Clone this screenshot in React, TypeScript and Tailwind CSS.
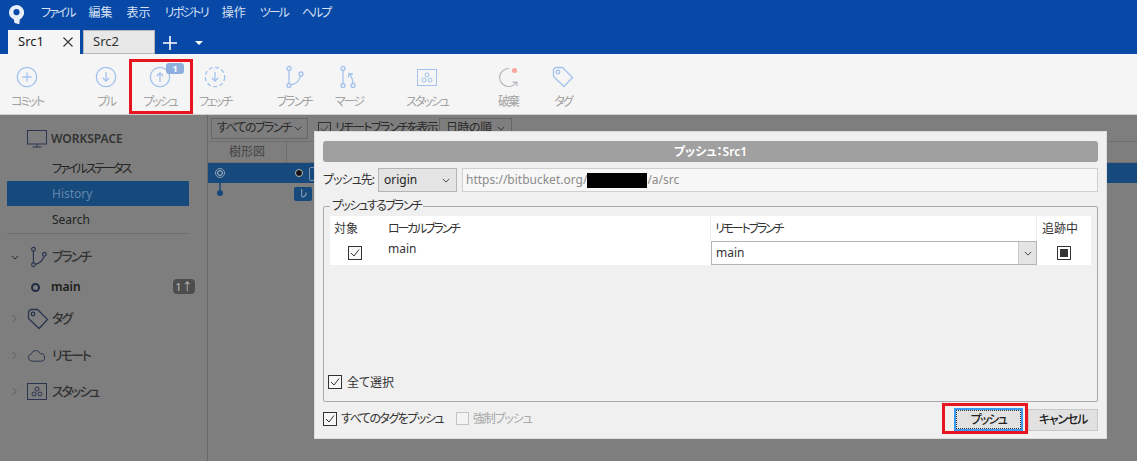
const navy = "#2b3550";
const lightBlue = "#a3c2ee";

function CheckBox({ className = "" }: { className?: string }) {
    return (
        <span className={`flex items-center justify-center w-[14px] h-[14px] border border-[#333] bg-[#f8f8f8] shrink-0 ${className}`}>
            <svg viewBox="0 0 12 12" className="w-[12px] h-[12px]" fill="none" stroke="#333" strokeWidth={1}>
                <path d="M2 6l3 3 5-6.5" />
            </svg>
        </span>
    );
}

function Chevron({ color = "#444" }: { color?: string }) {
    return (
        <svg viewBox="0 0 10 6" className="w-[8px] h-[5px]" fill="none" stroke={color} strokeWidth={1.2}>
            <path d="M1 1l4 4 4-4" />
        </svg>
    );
}

function BranchIcon({ color, size = 24 }: { color: string; size?: number }) {
    return (
        <svg viewBox="0 0 24 24" width={size} height={size} fill="none" stroke={color} strokeWidth={1.3}>
            <circle cx="7" cy="3.5" r="2" />
            <circle cx="7" cy="20.5" r="2" />
            <circle cx="19" cy="9" r="2" />
            <path d="M7 5.5v13M9 20c5-1 9-5 9.5-9" />
        </svg>
    );
}

function MergeIcon() {
    return (
        <svg viewBox="0 0 24 24" width={24} height={24} fill="none" stroke={lightBlue} strokeWidth={1.3}>
            <circle cx="6" cy="3.5" r="2" />
            <circle cx="6" cy="20.5" r="2" />
            <circle cx="16" cy="20.5" r="2" />
            <path d="M6 5.5v13M16 18.5c0-3-.5-5-3-9.5M11.5 12.5L12 8.5l4 .5" />
        </svg>
    );
}

function StashIcon({ color, w = 20, h = 17 }: { color: string; w?: number; h?: number }) {
    return (
        <svg viewBox="0 0 20 17" width={w} height={h} fill="none" stroke={color} strokeWidth={1}>
            <rect x="0.5" y="0.5" width="19" height="16" />
            <circle cx="10" cy="6" r="2" />
            <circle cx="7" cy="11" r="2" />
            <circle cx="13" cy="11" r="2" />
        </svg>
    );
}

function TagIcon({ color, size = 22 }: { color: string; size?: number }) {
    return (
        <svg viewBox="0 0 22 22" width={size} height={size} fill="none" stroke={color} strokeWidth={1.3}>
            <path d="M1.5 3.5l2-2h7l10 10-8.5 9-10.5-10z" />
            <circle cx="6" cy="6" r="1.8" />
        </svg>
    );
}

function CircleArrow({ dir, dashed = false }: { dir: "up" | "down"; dashed?: boolean }) {
    return (
        <svg viewBox="0 0 22 22" width={22} height={22} fill="none" stroke={lightBlue} strokeWidth={1.3}>
            <circle cx="11" cy="11" r="9.7" strokeDasharray={dashed ? "4 2.5" : undefined} />
            {dir === "up" ? <path d="M11 16V7M7.8 10L11 6.8 14.2 10" /> : <path d="M11 6v9M7.8 12L11 15.2 14.2 12" />}
        </svg>
    );
}

function ToolItem({ label, className, children }: { label: string; className?: string; children: React.ReactNode }) {
    return (
        <div className={`relative flex flex-col items-center w-[54px] shrink-0 ${className ?? ""}`}>
            <div className="h-[26px] flex items-center justify-center">{children}</div>
            <span className="mt-[4px] text-[12px] leading-[16px] tracking-[-2px] text-[#a2a2a2] whitespace-nowrap">{label}</span>
        </div>
    );
}

function SideHead({ label, open, icon, className }: { label: string; open?: boolean; icon: React.ReactNode; className: string }) {
    return (
        <div className={`flex items-center pl-[11px] ${className}`}>
            <span className="w-[16px] flex items-center">
                {open ? (
                    <Chevron color="#222" />
                ) : (
                    <svg viewBox="0 0 6 10" className="w-[5px] h-[9px] ml-[1px]" fill="none" stroke="#5c5c5c" strokeWidth={1.2}>
                        <path d="M1 1l4 4-4 4" />
                    </svg>
                )}
            </span>
            <span className="w-[24px] flex items-center">{icon}</span>
            <span className="text-[13px] font-medium tracking-[-2px] text-[#333] ml-[1px]">{label}</span>
        </div>
    );
}

export default function App() {
    return (
        <div className="relative w-full h-screen overflow-hidden flex flex-col bg-[#7e7e7e] font-['Noto_Sans','Noto_Sans_CJK_JP',sans-serif] [font-feature-settings:'palt']">
            {/* Title + tabs */}
            <div className="h-[54px] bg-[#0848a6] shrink-0">
                <div className="h-[30px] flex items-center pl-[8px] text-[12px] text-[#d5e0f2]">
                    <svg viewBox="0 0 18 22" width={17} height={21} className="mb-[2px]">
                        <path d="M1 9a8 8 0 1 1 11.5 7.2l-.5 5L7 20l-1-4A8 8 0 0 1 1 9z" fill="#e8eef8" />
                        <circle cx="9" cy="8.5" r="3.2" fill="#0848a6" />
                    </svg>
                    <div className="flex ml-[16px] gap-[14px] mb-[4px]">
                        <span className="tracking-[-2px]">ファイル</span>
                        <span>編集</span>
                        <span>表示</span>
                        <span className="tracking-[-1.8px]">リポジトリ</span>
                        <span>操作</span>
                        <span className="tracking-[-2px]">ツール</span>
                        <span className="tracking-[-2px]">ヘルプ</span>
                    </div>
                </div>
                <div className="h-[24px] flex items-end pl-[8px]">
                    <div className="h-[24px] w-[72px] bg-[#f5f5f5] flex items-center justify-between pl-[10px] pr-[7px] text-[13px] text-[#222]">
                        <span>Src1</span>
                        <svg viewBox="0 0 10 10" className="w-[10px] h-[10px]" stroke="#333" strokeWidth={1.1}>
                            <path d="M0.5 0.5l9 9M9.5 0.5l-9 9" />
                        </svg>
                    </div>
                    <div className="ml-[3px] h-[24px] w-[72px] bg-[#e8e8e8] border border-[#b8b8b8] flex items-center pl-[9px] text-[13px] text-[#333]">Src2</div>
                    <svg viewBox="0 0 14 14" className="w-[14px] h-[14px] ml-[8px] mb-[4px]" stroke="#fff" strokeWidth={1.6}>
                        <path d="M7 0v14M0 7h14" />
                    </svg>
                    <span className="ml-[18px] mb-[9px] w-0 h-0 border-x-[4px] border-x-transparent border-t-[4px] border-t-white" />
                </div>
            </div>

            {/* Toolbar */}
            <div className="relative h-[61px] shrink-0 bg-[#f5f5f5] border-b border-[#cfcfcf] flex pt-[10px]">
                <ToolItem label="コミット">
                    <svg viewBox="0 0 22 22" width={22} height={22} fill="none" stroke={lightBlue} strokeWidth={1.3}>
                        <circle cx="11" cy="11" r="9.7" />
                        <path d="M11 6.5v9M6.5 11h9" />
                    </svg>
                </ToolItem>
                <ToolItem label="プル" className="ml-[25px]">
                    <CircleArrow dir="down" />
                </ToolItem>
                <ToolItem label="プッシュ">
                    <CircleArrow dir="up" />
                    <span className="absolute left-[33px] -top-[1px] h-[11px] w-[18px] rounded-[3px] bg-[#8eaedd] text-white text-[9px] leading-[11px] font-bold text-center">1</span>
                </ToolItem>
                <ToolItem label="フェッチ" className="ml-[1px]">
                    <CircleArrow dir="down" dashed />
                </ToolItem>
                <ToolItem label="ブランチ" className="ml-[25px]">
                    <BranchIcon color={lightBlue} />
                </ToolItem>
                <ToolItem label="マージ" className="ml-[1px]">
                    <MergeIcon />
                </ToolItem>
                <ToolItem label="スタッシュ" className="ml-[24px]">
                    <StashIcon color={lightBlue} />
                </ToolItem>
                <ToolItem label="破棄" className="ml-[27px]">
                    <svg viewBox="0 0 22 22" width={22} height={22} fill="none" stroke="#b5b8bd" strokeWidth={1.2}>
                        <path d="M12 2.5A9 9 0 1 0 19.5 16M15.5 16.2h4.5v4" />
                        <circle cx="17.5" cy="4.5" r="2.5" fill="#f7a79b" stroke="none" />
                    </svg>
                </ToolItem>
                <ToolItem label="タグ" className="ml-[1px]">
                    <TagIcon color={lightBlue} />
                </ToolItem>
                <div className="absolute left-[129px] top-[5px] w-[64px] h-[55px] border-[3px] border-[#e8141f]" />
            </div>

            {/* Main */}
            <div className="flex flex-1 min-h-0">
                <div className="w-[208px] shrink-0 border-r border-[#676767] pt-[7px]">
                    <div className="w-[189px]">
                        <div className="h-[34px] flex items-center pl-[27px]">
                            <svg viewBox="0 0 20 18" width={20} height={18} fill="none" stroke={navy} strokeWidth={1}>
                                <rect x="0.5" y="0.5" width="19" height="13.5" />
                                <path d="M10 14v3M5.5 17h9" />
                            </svg>
                            <span className="ml-[4px] text-[12px] font-semibold text-[#333]">WORKSPACE</span>
                        </div>
                        <div className="h-[25px] flex items-center pl-[52px] text-[12px] tracking-[-2px] text-[#222]">ファイルステータス</div>
                        <div className="h-[25px] ml-[7px] bg-[#16497c] flex items-center pl-[45px] text-[12px] text-[#6488ac]">History</div>
                        <div className="h-[27px] flex items-center pl-[52px] text-[12px] text-[#222]">Search</div>
                        <div className="ml-[7px] border-t border-[#6c6c6c] h-[7px]" />
                        <SideHead label="ブランチ" open className="h-[34px]" icon={<BranchIcon color={navy} size={22} />} />
                        <div className="h-[26px] flex items-center pl-[31px] relative">
                            <span className="w-[9px] h-[9px] rounded-full border-2 border-[#1f2a45]" />
                            <span className="ml-[11px] text-[12px] font-semibold text-[#1a1a1a]">main</span>
                            <span className="absolute left-[173px] top-[5px] w-[22px] h-[15px] rounded-[4px] bg-[#4d4d4d] text-[#bcbcbc] text-[11px] leading-[15px] text-center whitespace-nowrap">1↑</span>
                        </div>
                        <SideHead label="タグ" className="h-[37px]" icon={<TagIcon color={navy} />} />
                        <SideHead label="リモート" className="h-[37px]" icon={
                            <svg viewBox="0 0 20 13" width={19} height={13} fill="none" stroke={navy} strokeWidth={1}>
                                <path d="M5 12.5a3.8 3.8 0 0 1-.5-7.5A5 5 0 0 1 14 4.5a4 4 0 0 1 1 8z" />
                            </svg>
                        } />
                        <SideHead label="スタッシュ" className="h-[35px]" icon={<StashIcon color={navy} />} />
                    </div>
                </div>
                <div className="flex-1 min-w-0 flex flex-col">
                    <div className="h-[27px] shrink-0 flex items-center pl-[3px] text-[12px] text-[#2a2a2a] border-b border-[#6f6f6f]">
                        <div className="h-[21px] w-[97px] border border-[#666] flex items-center justify-between px-[5px]">
                            <span className="whitespace-nowrap tracking-[-1.6px]">すべてのブランチ</span>
                            <Chevron color="#333" />
                        </div>
                        <span className="ml-[10px] w-[13px] h-[13px] border border-[#333] flex items-center justify-center">
                            <svg viewBox="0 0 12 12" className="w-[11px] h-[11px]" fill="none" stroke="#333" strokeWidth={1}>
                                <path d="M2 6l3 3 5-6.5" />
                            </svg>
                        </span>
                        <span className="ml-[4px] w-[101px] whitespace-nowrap tracking-[-1.6px]">リモートブランチを表示</span>
                        <div className="ml-[3px] h-[21px] w-[73px] border border-[#666] flex items-center justify-between px-[6px]">
                            <span className="tracking-[-0.5px]">日時の順</span>
                            <Chevron color="#333" />
                        </div>
                    </div>
                    <div className="h-[21px] shrink-0 flex text-[12px] text-[#444] border-b border-[#6f6f6f]">
                        <div className="w-[79px] flex items-center justify-center border-r border-[#6f6f6f]">樹形図</div>
                    </div>
                    <div className="relative h-[20px] shrink-0 bg-[#16497c] flex items-start pl-[6px] pt-[4px]">
                        <svg viewBox="0 0 12 30" width={12} height={30} className="shrink-0 overflow-visible">
                            <circle cx="6" cy="6" r="4.5" fill="none" stroke="#8fa0b4" />
                            <circle cx="6" cy="6" r="2.4" fill="none" stroke="#c0c8d2" />
                            <path d="M6 11v12" stroke="#16497c" strokeWidth="1.5" />
                            <circle cx="6" cy="26" r="3" fill="#16497c" />
                        </svg>
                        <span className="ml-[69px] mt-[2px] w-[8px] h-[8px] rounded-full bg-[#111] border border-[#bbb]" />
                        <span className="ml-[6px] w-[6px] h-[14px] border border-[#7f93a8] rounded-[2px]" />
                    </div>
                    <div className="flex h-[18px] items-center pl-[86px] pt-[3px]">
                        <span className="w-[18px] h-[14px] rounded-[2px] bg-[#16497c] flex items-center justify-center">
                            <svg viewBox="0 0 10 12" width={9} height={11} fill="none" stroke="#8fa0b4" strokeWidth={1.2}>
                                <path d="M3 1v8M3 10c3 0 5-2 5-5" />
                            </svg>
                        </span>
                    </div>
                </div>
            </div>

            {/* Push dialog */}
            <div className="absolute left-[314px] top-[131px] w-[793px] h-[308px] bg-[#f0f0f0] border border-[#dcdcdc] px-[8px] pt-[9px] flex flex-col text-[12px] text-[#333]">
                <div className="h-[21px] shrink-0 rounded-[3px] bg-[#a0a0a0] flex items-center justify-center text-[12px] font-semibold text-white">プッシュ：Src1</div>
                <div className="flex items-center h-[24px] mt-[6px] shrink-0">
                    <span className="w-[55px] whitespace-nowrap tracking-[-1px]">プッシュ先:</span>
                    <div className="w-[79px] h-[24px] bg-[#e4e4e4] border border-[#b5b5b5] flex items-center justify-between pl-[5px] pr-[6px] text-[#222]">
                        <span>origin</span>
                        <Chevron />
                    </div>
                    <div className="ml-[5px] flex-1 h-[24px] bg-[#f7f7f7] border border-[#cfcfcf] flex items-center pl-[3px] text-[#8b8b8b]">
                        <span>https://bitbucket.org/</span>
                        <span className="w-[60px] h-[15px] bg-black" />
                        <span>/a/src</span>
                    </div>
                </div>
                <div className="relative mt-[14px] h-[196px] shrink-0 border border-[#a8a8a8] rounded-[2px] px-[6px] pt-[9px] flex flex-col">
                    <span className="absolute left-[6px] -top-[9px] bg-[#f0f0f0] px-[2px] leading-[16px] whitespace-nowrap tracking-[-1.7px]">プッシュするブランチ</span>
                    <div className="h-[25px] flex items-center bg-white">
                        <span className="w-[58px] pl-[4px]">対象</span>
                        <span className="w-[323px] border-r border-[#eee] h-full flex items-center tracking-[-2.2px]">ローカルブランチ</span>
                        <span className="w-[326px] pl-[4px] border-r border-[#eee] h-full flex items-center tracking-[-2.2px]">リモートブランチ</span>
                        <span className="flex-1 pl-[5px]">追跡中</span>
                    </div>
                    <div className="h-[24px] flex items-center bg-white">
                        <span className="w-[58px] pl-[18px]">
                            <CheckBox />
                        </span>
                        <span className="w-[323px] self-start leading-[16px]">main</span>
                        <div className="w-[326px] h-[24px] border border-[#b5b5b5] flex items-center pl-[4px]">
                            <span className="flex-1">main</span>
                            <span className="w-[18px] h-full bg-[#e4e4e4] border-l border-[#c8c8c8] flex items-center justify-center">
                                <Chevron />
                            </span>
                        </div>
                        <span className="flex-1 flex justify-center">
                            <span className="w-[14px] h-[14px] border border-[#333] flex items-center justify-center">
                                <span className="w-[8px] h-[8px] bg-[#333]" />
                            </span>
                        </span>
                    </div>
                    <div className="flex-1" />
                    <div className="flex items-center mb-[9px] -ml-[2px]">
                        <CheckBox />
                        <span className="ml-[5px] mt-[2px]">全て選択</span>
                    </div>
                </div>
                <div className="flex items-center mt-[6px]">
                    <div className="flex items-center mb-[2px]">
                        <CheckBox />
                        <span className="ml-[4px] w-[115px] whitespace-nowrap tracking-[-1.5px]">すべてのタグをプッシュ</span>
                        <span className="w-[13px] h-[13px] border border-[#c4c4c4] bg-[#f4f4f4]" />
                        <span className="ml-[4px] text-[#a8a8a8] tracking-[-1.2px]">強制プッシュ</span>
                    </div>
                    <div className="flex-1" />
                    <div className="relative w-[69px] h-[23px] border-2 border-[#3b9bf0] bg-[#e1e1e1] flex items-center justify-center text-[#222] font-medium tracking-[-1.5px]">
                        <span className="absolute inset-0 border border-dotted border-[#333]" />
                        プッシュ
                        <div className="absolute -left-[14px] -top-[7px] w-[86px] h-[31px] border-[3px] border-[#e8141f]" />
                    </div>
                    <div className="ml-[5px] w-[70px] h-[22px] bg-[#e1e1e1] border border-[#c8c8c8] flex items-center justify-center text-[#222] font-medium tracking-[-1.2px]">キャンセル</div>
                </div>
            </div>
        </div>
    );
}
